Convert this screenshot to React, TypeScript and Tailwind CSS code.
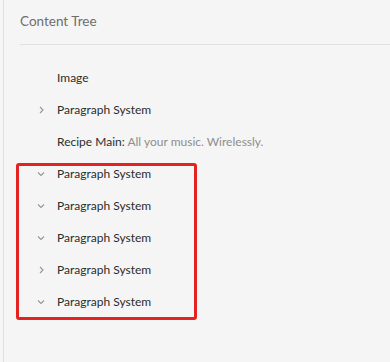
import React from "react";

type Row = { label: string; open?: boolean; leaf?: boolean; note?: string };

const rows: Row[] = [
  { label: "Image", leaf: true },
  { label: "Paragraph System", open: false },
  { label: "Recipe Main:", leaf: true, note: "All your music. Wirelessly." },
  { label: "Paragraph System", open: true },
  { label: "Paragraph System", open: true },
  { label: "Paragraph System", open: true },
  { label: "Paragraph System", open: false },
  { label: "Paragraph System", open: true },
];

const Chevron = ({ open }: { open?: boolean }) => (
  <svg width="16" height="16" viewBox="0 0 16 16" className="text-[#959595]">
    {open ? (
      <path d="M5 6.5 L8 9.5 L11 6.5" fill="none" stroke="currentColor" strokeWidth="1.1" />
    ) : (
      <path d="M7 5 L10 8 L7 11" fill="none" stroke="currentColor" strokeWidth="1.1" />
    )}
  </svg>
);

const App = () => {
  return (
    <div
      className="relative w-[390px] h-[362px] bg-[#f5f5f5] overflow-hidden"
      style={{ fontFamily: 'Lato, "Noto Sans", sans-serif' }}
    >
      <div className="ml-[3px] h-full border-l border-[#e1e1e1] pl-[16px]">
        <div className="h-[45px] border-b border-[#e1e1e1] flex items-center pb-[2px]">
          <h2 className="text-[13.5px] text-[#6e6e6e]">Content Tree</h2>
        </div>
        <ul className="pt-[17px] pl-[13px]">
          {rows.map((r, i) => (
            <li key={i} className="h-8 flex items-center">
              <span className="w-4 flex justify-center">
                {!r.leaf && <Chevron open={r.open} />}
              </span>
              <span className="ml-2 text-[12px] text-[#2c2c2c] whitespace-nowrap">
                {r.label}
                {r.note && <span className="text-[#8e8e8e]"> {r.note}</span>}
              </span>
            </li>
          ))}
        </ul>
      </div>
      {/* annotation box */}
      <div className="absolute left-[16px] top-[163px] w-[181px] h-[157px] border-[3px] border-[#e32322] rounded-[3px]" />
    </div>
  );
};

export default App;
